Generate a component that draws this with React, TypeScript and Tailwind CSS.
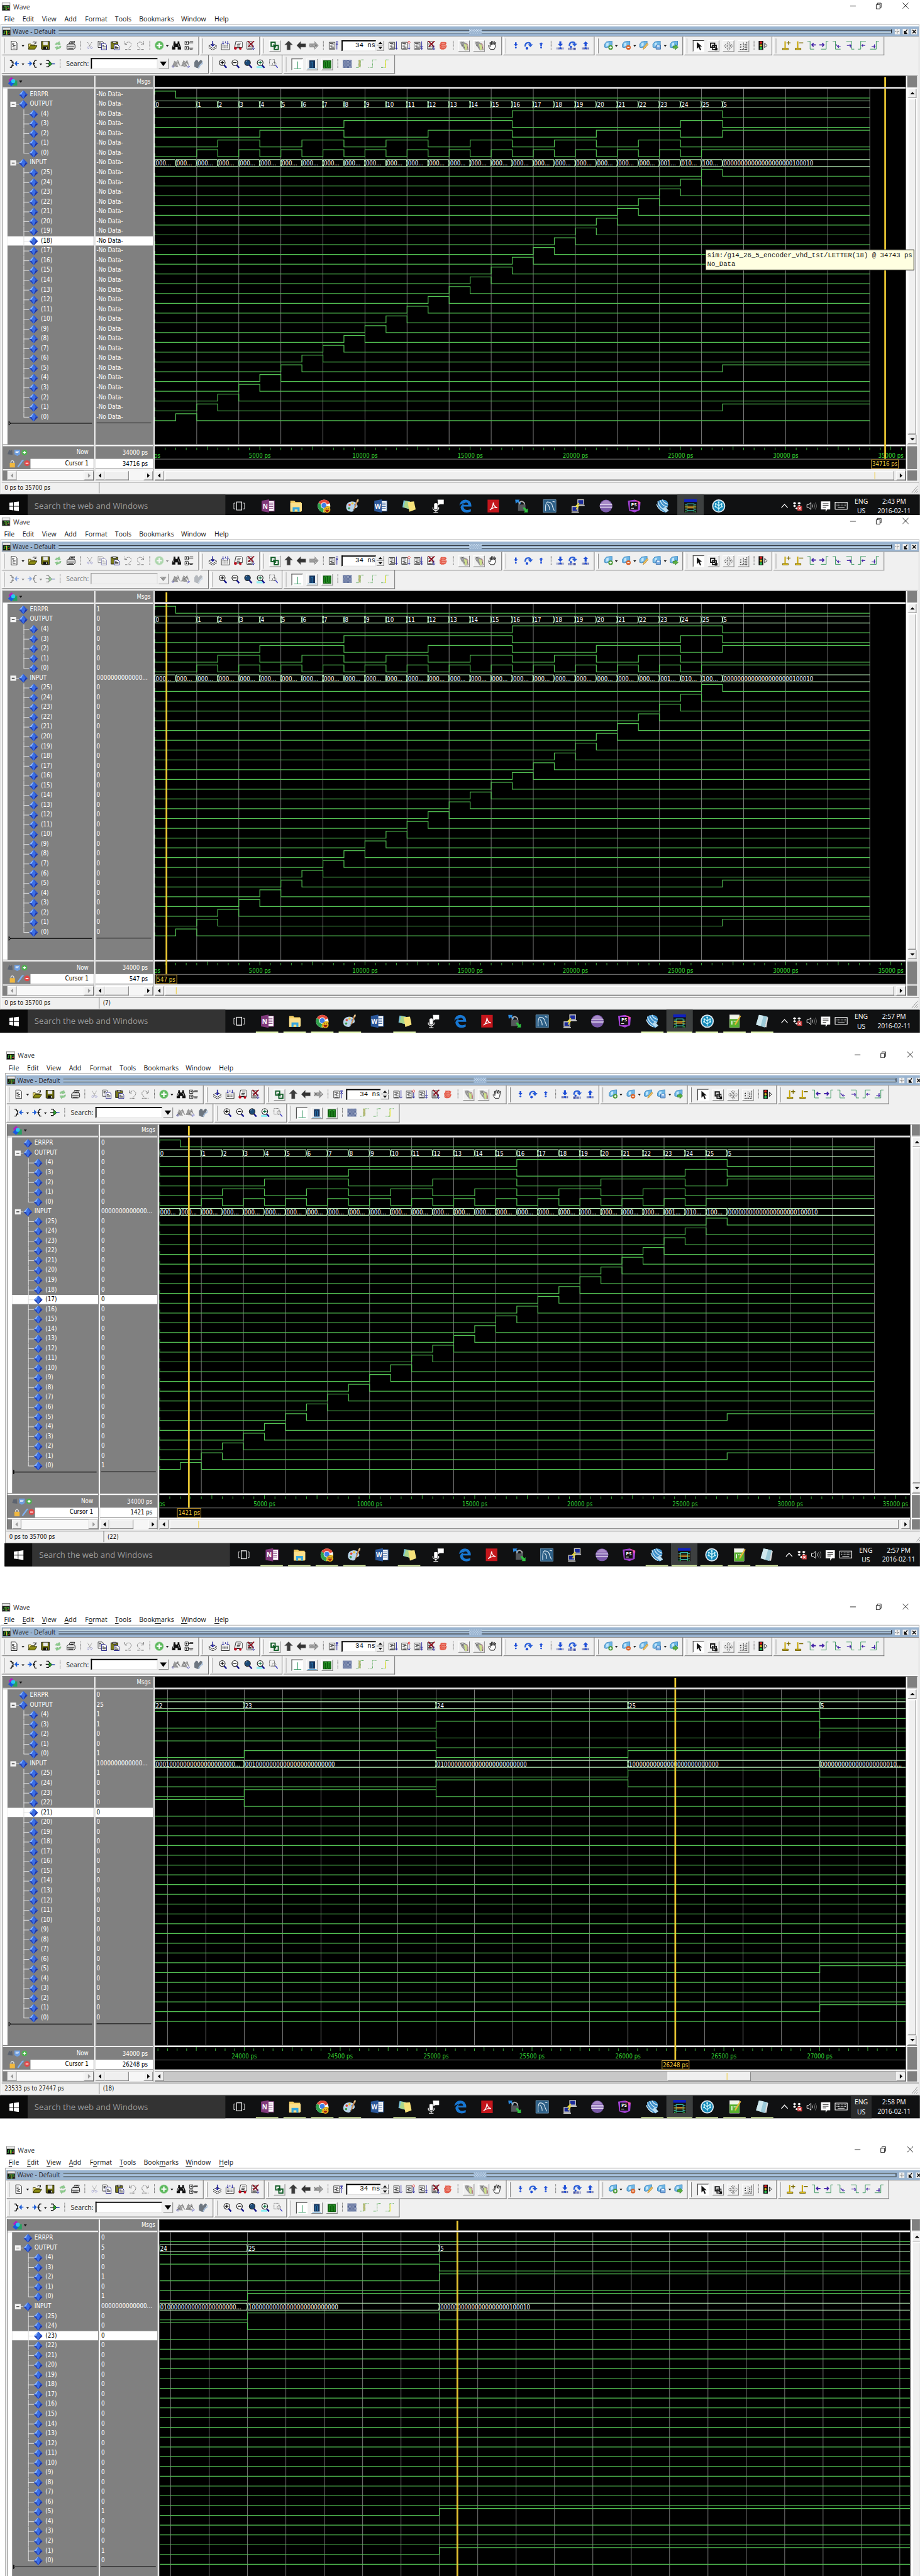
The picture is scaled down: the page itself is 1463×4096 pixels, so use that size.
import React from "react";

type Node = React.ReactNode;
type Slot = [number, number, Node];

/* ---------- signal model ---------- */

const OUTPUT: [number, number][] = [[0, 0]];
for (let n = 1; n <= 25; n++) OUTPUT.push([(n + 1) * 1000, n]);
OUTPUT.push([27000, 5]);

const INPUT: [number, number[]][] = [[0, []]];
for (let n = 0; n <= 25; n++) INPUT.push([(n + 1) * 1000, [n]]);
INPUT.push([27000, [1, 5]]);

const bitsToString = (bits: number[]) => {
  let s = "";
  for (let b = 25; b >= 0; b--) s += bits.includes(b) ? "1" : "0";
  return s;
};

const NAMES: string[] = ["ERRPR", "OUTPUT"];
for (let b = 4; b >= 0; b--) NAMES.push(`(${b})`);
NAMES.push("INPUT");
for (let b = 25; b >= 0; b--) NAMES.push(`(${b})`);

const UI_FONT = "'DejaVu Sans Condensed', 'Noto Sans', sans-serif";

type Cfg = {
  noData?: boolean;
  disabled?: boolean;
  mnemonics?: boolean;
  start: number;
  end: number;
  grid: number;
  minor: number;
  cursor: number;
  selected?: number;
  status: string;
  status2?: string;
  thumb: [number, number];
  mark: number;
  pitch: number;
  first: number;
  many: boolean;
  time: string;
  langLit?: boolean;
};

const valuesAt = (c: Cfg): string[] => {
  if (c.noData) return NAMES.map(() => "-No Data-");
  let out = 0;
  let inp: number[] = [];
  OUTPUT.forEach(([t, v]) => { if (t <= c.cursor) out = v; });
  INPUT.forEach(([t, v]) => { if (t <= c.cursor) inp = v; });
  const r = [c.cursor < 1000 ? "1" : "0", String(out)];
  for (let b = 4; b >= 0; b--) r.push(String((out >> b) & 1));
  r.push(bitsToString(inp).slice(0, 13) + "...");
  for (let b = 25; b >= 0; b--) r.push(inp.includes(b) ? "1" : "0");
  return r;
};

const W = 1306;

function Waves({ c }: { c: Cfg }) {
  const X = (t: number) => ((t - c.start) / (c.end - c.start)) * W;
  const stop = Math.min(c.end, 34000);
  const grid: number[] = [];
  for (let t = Math.ceil((c.start + 1) / c.grid) * c.grid; t <= stop; t += c.grid) grid.push(t);

  const digital = (levels: [number, number][], row: number) => {
    const hi = 4.5 + row * 17;
    const lo = 16.5 + row * 17;
    let d = "";
    levels.forEach(([t, v], i) => {
      const e = Math.min(i + 1 < levels.length ? levels[i + 1][0] : stop, stop);
      const s = Math.max(t, c.start);
      if (e <= s) return;
      const y = v ? hi : lo;
      if (!d) d = c.start === 0 ? `M0.5 ${v ? hi + 6 : lo - 6}V${y}` : `M1 ${y}`;
      else d += `V${y}`;
      d += `H${X(e).toFixed(1)}`;
    });
    return <path key={row} d={d} />;
  };

  const bus = (segs: [number, string][], row: number) =>
    segs.map(([t, label], i) => {
      const e = Math.min(i + 1 < segs.length ? segs[i + 1][0] : stop, stop);
      const s = Math.max(t, c.start);
      if (e <= s) return null;
      const a = X(s);
      const b = X(e);
      const w = b - a;
      const top = 4.5 + row * 17;
      const mid = top + 6;
      const bot = top + 12;
      const n = Math.floor((w - 15.6) / 6);
      const text = label.length * 6 + 4 <= w ? label : label.slice(0, n) + "...";
      const openEnd = e === stop;
      return (
        <g key={t}>
          <path
            d={openEnd
              ? `M${b} ${top}H${a + 1.2}L${a + 0.3} ${mid}L${a + 1.2} ${bot}H${b}`
              : `M${a + 0.3} ${mid}L${a + 1.2} ${top}H${b - 1.2}L${b - 0.3} ${mid}L${b - 1.2} ${bot}H${a + 1.2}Z`}
            fill="none"
            stroke="#bcf4bc"
            strokeWidth="1.15"
          />
          <text x={a + 1.6} y={top + 10.6} fontSize="10.5" fill="#fff">{text}</text>
        </g>
      );
    });

  const rows: Node[] = [digital([[0, 1], [1000, 0]], 0)];
  for (let b = 4; b >= 0; b--) rows.push(digital(OUTPUT.map(([t, v]) => [t, (v >> b) & 1]), 6 - b));
  for (let b = 25; b >= 0; b--) rows.push(digital(INPUT.map(([t, v]) => [t, v.includes(b) ? 1 : 0]), 33 - b));

  return (
    <svg className="block" width={W} height={619} fontFamily={UI_FONT}>
      {grid.map((t) => <path key={t} d={`M${X(t)} 0V619`} stroke="#858585" />)}
      <g fill="none" stroke="#52c052" strokeWidth="1.3">{rows}</g>
      {bus(OUTPUT.map(([t, v]) => [t, String(v)]), 1)}
      {bus(INPUT.map(([t, v]) => [t, bitsToString(v)]), 7)}
    </svg>
  );
}

function Ruler({ c }: { c: Cfg }) {
  const X = (t: number) => ((t - c.start) / (c.end - c.start)) * W;
  const ticks: number[] = [];
  for (let t = Math.ceil(c.start / c.minor) * c.minor; t <= c.end; t += c.minor) ticks.push(t);
  return (
    <svg className="block" width={W} height={22} fontFamily={UI_FONT} fontSize="10.5">
      <path d={ticks.filter((t) => t).map((t) => `M${X(t).toFixed(1)} ${t % (c.minor * 5) ? 2.5 : 0}V6.7`).join("")} stroke="#3fc03f" />
      {ticks.filter((t) => t % (c.minor * 10) === 0).map((t) => (
        <text key={t} x={X(t)} y={19.8} textAnchor="middle" fill="#34d034">{t} ps</text>
      ))}
    </svg>
  );
}

/* ---------- small icons ---------- */

function I({ children, w = 16, h = 16 }: { children?: Node; w?: number; h?: number }) {
  return <svg width={w} height={h} viewBox="0 0 16 16" className="block shrink-0" fill="none">{children}</svg>;
}

const page = (x = 0) => (
  <>
    <path d={`M${x + 2.5} .5h7l3 3v12h-10z`} fill="#fff" stroke="#111" />
    <path d={`M${x + 4} 4.5h4M${x + 4} 6.5h3M${x + 6} 8.5h4M${x + 4} 10.5h4M${x + 5} 12.5h5`} stroke="#111" />
  </>
);
const halfPage = (
  <>
    <path d="M.5 2.5h10v12h-10z" fill="#fff" stroke="#333" />
    <path d="M2 5h6M4 7h5M2 9h4M4 11h5M2 13h7" stroke="#111" />
  </>
);
const badge = (fill: string, kind: "plus" | "minus" | "save" | "edit" | "go") => (
  <>
    <path d="M1 6l3-4 4-1 6-1v8l-4 2-6 2-3-1z" fill="#6fb7e6" stroke="#3f86bd" />
    <path d="M4 4l4-1v5l-4 2z" fill="#c5e8fb" />
    {(kind === "plus" || kind === "minus") && <><circle cx="11.5" cy="11.5" r="4" fill={fill} /><path d={kind === "plus" ? "M9.5 11.5h4M11.5 9.5v4" : "M9.5 11.5h4"} stroke="#fff" strokeWidth="1.4" /></>}
    {kind === "save" && <><path d="M6.5 7.5h8v7h-8z" fill={fill} stroke="#3a6ca8" /><path d="M8.5 8h4v2h-4z" fill="#fff" /></>}
    {kind === "edit" && <path d="M7 15l1-4 6-7 2 2-6 7z" fill={fill} stroke="#b8862b" strokeWidth=".8" />}
    {kind === "go" && <path d="M6 9h4V6.5l5 4.500-5 4.500V13H6z" fill={fill} stroke="#2f7d2f" strokeWidth=".8" />}
  </>
);
const lens = (fill: string, inner?: Node) => (
  <>
    <path d="M9.5 10l4.500 5" stroke="#10108c" strokeWidth="2.6" />
    <circle cx="6.5" cy="6" r="5" fill={fill} stroke="#222" strokeWidth="1.3" />
    {inner}
  </>
);
const blueDown = <path d="M3 0h4v5h3L5 10.500 0 5h3z" fill="#1f4fd8" />;
const bars = "M1 12v4M3 12v4M5 12v4M7 12v4M9 12v4M11 12v4M13 12v4";

const ic: Record<string, Node> = {
  doc: <I>{page()}</I>,
  open: <I><path d="M.5 14.500v-9h4l1 1.500h6v2" fill="#f3e27a" stroke="#3a3a00" /><path d="M.5 14.500l3-6h12l-4 6z" fill="#8b8b12" stroke="#2b2b00" /><path d="M8 3q3-3 5 1M13.500 1v3.500h-3" stroke="#111" /></I>,
  save: <I><path d="M1 1h14v14H2l-1-1z" fill="#6f6f0c" stroke="#111" /><path d="M4 1.500h8v6H4z" fill="#e8e8e8" /><path d="M4 10h8v5H4z" fill="#111" /><path d="M9.500 11h1.500v3H9.500z" fill="#fff" /></I>,
  refresh: <I><path d="M3 6q2-4 6-3l1-2 2 5-5 1 1-2q-2 0-3 2zM13 9q0 5-6 5l-1 2-3-5 5-1-1 2q2 0 3-2z" fill="#8fcf8f" stroke="#6aa86a" strokeDasharray="1 1" /></I>,
  print: <I w={18}><path d="M5 6l2-5h8l-2 5" fill="#fff" stroke="#111" /><path d="M1.500 7.500l2-2h11l1 2v5l-2 2h-12z" fill="#ddd" stroke="#111" /><path d="M2 10.500h12M4 13h8M8 2.500h5M7 4.500h5" stroke="#111" /></I>,
  cut: <I w={13}><path d="M3 1l6 10M12 1L6 11" stroke="#555" strokeDasharray="1.500 1" /><circle cx="4" cy="13" r="2" stroke="#3a3aae" strokeDasharray="1 1" /><circle cx="11" cy="13" r="2" stroke="#3a3aae" strokeDasharray="1 1" /></I>,
  copy: <I><path d="M.5.5h7l2 2v9h-9z" fill="#fff" stroke="#111" /><path d="M6.500 4.500h6l3 3v8h-9z" fill="#fff" stroke="#10107c" /><path d="M2 3.500h4M2 5.500h3M2 7.500h3M8 8.500h3M8 10.500h6M8 12.500h6" stroke="#222" /></I>,
  paste: <I><path d="M1 2h12v12H1z" fill="#7d7d1c" stroke="#111" /><path d="M4 1h6v3H4z" fill="#ddd" stroke="#111" /><path d="M6.500 6.500h6l3 3v6h-9z" fill="#fff" stroke="#10107c" /><path d="M8 9.500h3M8 11.500h6M8 13.500h6" stroke="#222" /></I>,
  undo: <I><path d="M2 1v5h5M2.500 5.500Q9-1 13 5q1 5-5 8M3 15h10" stroke="#333" strokeDasharray="1 1" /></I>,
  redo: <I><path d="M14 1v5H9M13.500 5.500Q7-1 3 5q-1 5 5 8M3 15h11" stroke="#333" strokeDasharray="1 1" /></I>,
  plus: <I><circle cx="8" cy="8" r="7.500" fill="#5cb85c" stroke="#9bd39b" /><path d="M8 3.500v9M3.500 8h9" stroke="#fff" strokeWidth="2.400" /></I>,
  binoc: <I><path d="M3 1h3v3l1 1h2l1-1V1h3v3l3 8v3h-6v-4H6v4H0v-3l3-8z" fill="#111" /><path d="M3.500 6L2 11M11 6l2 5" stroke="#fff" strokeWidth=".9" /></I>,
  tree: <I><path d="M.5.5h6v6h-6zM.5 9.500h6v6h-6z" fill="#fff" stroke="#111" /><path d="M2 3.500h3M3.500 2v3M2 12.500h3M3.500 11v3M7 3.500h8M9 1.500h6M7 12.500h8M9 14.500h5" stroke="#111" /></I>,
  compile: <I><path d="M1 9l7-4 7 4-7 4zM1 12l7 4 7-4" fill="#fff" stroke="#222" /><path d="M8 0v9M5 6l3 3 3-3" stroke="#1a1a9a" strokeWidth="1.600" /></I>,
  compileAll: <I><path d="M1 5v10.500h14V5" stroke="#222" /><path d="M3 8h10M3 10h10M3 12h10" stroke="#222" strokeDasharray="1 1" /><path d="M4 0v6M2 4l2 2 2-2M12 0v6M10 4l2 2 2-2M8 1v3" stroke="#1a1a9a" /></I>,
  sim: <I><path d="M4.500.500h9l2 2v9h-6M4.500.500l-3 13" fill="#fff" stroke="#222" /><path d="M7 4h6M6 6.500h6M6 9h5" stroke="#222" /><path d="M3 12h9" stroke="#111" strokeWidth="1.500" /><circle cx="3.500" cy="13" r="2.500" fill="#c01020" /><circle cx="12" cy="13.500" r="2.200" fill="#c01020" /></I>,
  brk: <I><path d="M1.500 1.500h9v13h-9z" fill="#fff" stroke="#333" /><path d="M3 4h6M3 7h6M3 10h6M3 12.500h6" stroke="#111" /><path d="M3 0l10 11M14 0L4 10" stroke="#8e1220" strokeWidth="2" /><path d="M12.500 8v7M10 13l2.500 2.500L15 13" stroke="#1a1a9a" /></I>,
  link: <I><path d="M1.500 1.500h7v7h-7zM7 7h7v7H7z" stroke="#0c5a22" strokeWidth="2" /><path d="M5 5.500l5 5" stroke="#0c5a22" strokeWidth="2" /></I>,
  up: <I><path d="M8 0l7 7h-4v9H5V7H1z" fill="#3c3c3c" stroke="#888" strokeWidth=".6" /></I>,
  left: <I><path d="M0 8l7-7v4h9v6H7v4z" fill="#333" stroke="#888" strokeWidth=".6" /></I>,
  right: <I><path d="M16 8L9 1v4H0v6h9v4z" fill="url(#dk)" stroke="#999" strokeWidth=".6" /></I>,
  restart: <I w={18}>{halfPage}<path d="M12 1.500h4M12 3.500h4M14 4v11M12 7l2-2 2 2" stroke="#1a1a9a" /></I>,
  run: <I>{halfPage}<path d="M13.500 1v14M11 12l2.500 2.500L16 12" stroke="#1a1a9a" /></I>,
  cont: <I>{halfPage}<path d="M13.500 5v10M11.500 12l2 2.500 2-2.500" stroke="#1a1a9a" /><path d="M13.500 0l2 2.500-2 2.500-2-2.500z" fill="#fff" stroke="#e02020" /></I>,
  runAll: <I>{halfPage}<path d="M13.500 1v14M11 9l2.500 2.500L16 9M11 12.500l2.500 2.500 2.500-2.500" stroke="#1a1a9a" /></I>,
  stop: <I w={14}><path d="M3 1h9l3 2-2 3 2 3-2 5-4 2H4l-3-2V9l-1-2 2-2z" fill="url(#rd)" /><path d="M5 4.500h6M5 8h8M5 11.500h7" stroke="#f5b5a8" /></I>,
  dither: <I><path d="M1 1l5-1 8 4 2 11-6 1-7-9z" fill="url(#dk)" /><path d="M8 4l5 2v9h-3z" fill="#cfe08a" /><path d="M12 4l3 2v9" stroke="#d66" strokeDasharray="1 1" /></I>,
  hand: <I><path d="M4 15l-4-6 1-1 3 2-1-7h1.500l1 4L6 .5h1.500l.7 6L10 1h1l-.5 6 2-4h1l-1.500 9-1.500 3z" fill="#fff" stroke="#111" /></I>,
  bDown: <I w={11}><g transform="translate(2.500)">{blueDown}</g><circle cx="7.500" cy="13.500" r="2.300" fill="#1f4fd8" /></I>,
  bOver: <I><path d="M1 10Q1 2 8 2q5 0 5 4h3l-4.500 5L7 6h3q-1-2-3-1.500Q4 5 3.500 10z" fill="#2b5fd8" /><circle cx="5.500" cy="13" r="2.300" fill="#1f4fd8" /></I>,
  bUp: <I w={11}><path d="M5.500 10V5H2.500L7.500 0l5 5h-3v5z" fill="#1f4fd8" /><circle cx="7.500" cy="13.500" r="2.300" fill="#1f4fd8" /></I>,
  cDown: <I w={14}><g transform="translate(2.500)">{blueDown}</g><path d={bars} stroke="#1a2a8c" /><circle cx="7.500" cy="13.500" r="2" fill="#1f4fd8" /></I>,
  cOver: <I><path d="M1 9Q1 1 8 1q5 0 5 4h3l-4.500 5L7 5h3q-1-2-3-1.500Q4 4 3.500 9z" fill="#2b5fd8" /><circle cx="5" cy="10.500" r="1.800" fill="#1f4fd8" /><path d={bars} stroke="#1a2a8c" /></I>,
  cUp: <I w={14}><path d="M5.500 10V5H2.500L7.500 0l5 5h-3v5z" fill="#1f4fd8" /><path d={bars} stroke="#1a2a8c" /><circle cx="7.500" cy="13.500" r="2" fill="#1f4fd8" /></I>,
  bkAdd: <I w={17}>{badge("#4f9a3c", "plus")}</I>,
  bkDel: <I w={17}>{badge("#d9632a", "minus")}</I>,
  bkEdit: <I w={17}>{badge("#f0c060", "edit")}</I>,
  bkSave: <I w={17}>{badge("#7fb0e4", "save")}</I>,
  bkGo: <I w={17}>{badge("#5cb040", "go")}</I>,
  arrow: <I><path d="M5 1v12l3-3 2.500 5.500 2-1L10 9h4z" fill="#111" /></I>,
  zoomBox: <I><path d="M3 3h7v7H3z" stroke="#111" strokeWidth="2" /><path d="M6 7h7v7H6zM9 9l5 6M14 11v4h-4" stroke="#111" strokeWidth="1.600" /></I>,
  move: <I><path d="M8 0l3 3H9v4h4V5l3 3-3 3V9H9v4h2l-3 3-3-3h2V9H3v2L0 8l3-3v2h4V3H5z" stroke="#222" strokeDasharray="1 1" /></I>,
  measure: <I><path d="M2 6h3M3.500 4.500v3M2 10h3M3.500 8.500v3M2 14h12M8 2v12M14 1v14M10 5h3M10 8h3M10 11h3" stroke="#111" strokeDasharray="2 1" /></I>,
  traffic: <I w={17}><path d="M0 0h8v16H0z" fill="#111" /><circle cx="4" cy="3" r="2.200" fill="#e02020" /><circle cx="4" cy="8" r="2" fill="#d8b820" /><circle cx="4" cy="13" r="2.200" fill="#28c050" /><path d="M10.500 4v8l4-4z" fill="#fff" stroke="#111" /></I>,
  curAdd: <I><path d="M1 13h10v2.500H1z" fill="#e8c820" stroke="#6a5a00" /><path d="M5.500 1v12" stroke="#c8a400" strokeWidth="2.200" /><path d="M8 3.500h7M11.500 0v7" stroke="#7a6a00" strokeWidth="1.500" /></I>,
  curDel: <I><path d="M1 13h10v2.500H1z" fill="#e8c820" stroke="#6a5a00" /><path d="M5.500 1v12" stroke="#c8a400" strokeWidth="2.200" /><path d="M8 3.500h7" stroke="#7a6a00" strokeWidth="1.500" /></I>,
  e1: <I><path d="M0 .5h5v14h7" stroke="#2f8f55" /><path d="M15 7H8M11 4L8 7l3 3" stroke="#4424a8" strokeWidth="2" /></I>,
  e2: <I><path d="M16 .5h-4v14H3" stroke="#2f8f55" /><path d="M0 7h8M5 4l3 3-3 3" stroke="#4424a8" strokeWidth="2" /></I>,
  e3: <I><path d="M0 .5h5v14h9" stroke="#2f8f55" /><path d="M6 6l3 4M14 10H9M11 8l-2 2 2 2" stroke="#4424a8" strokeWidth="1.200" /></I>,
  e4: <I><path d="M2 .5h9v14h5" stroke="#2f8f55" /><path d="M3 8h7M8 6l2 2-2 3M9 11h2" stroke="#4424a8" strokeWidth="1.300" /></I>,
  e5: <I><path d="M0 14.500h5V.5h9" stroke="#2f8f55" /><path d="M13 8H7M9 6L7 8l2 2" stroke="#4424a8" strokeWidth="1.300" /></I>,
  e6: <I><path d="M0 14.500h11V.5h5" stroke="#2f8f55" /><path d="M3 10h6M8 6v7M7 8l2 2-2 2" stroke="#4424a8" strokeWidth="1.300" /></I>,
  inL: <I><path d="M0 2h3l3 5.500L3 14H0M3 5h4M3 10.500h4" stroke="#111" strokeWidth="1.500" /><path d="M16 7.500h-6M12 4.500L9 7.500l3 3z" stroke="#1f5fd8" fill="#1f5fd8" strokeWidth="1.500" /></I>,
  inR: <I><path d="M16 2h-3l-3 5.500 3 6.500h3M13 7.500H9" stroke="#111" strokeWidth="1.500" /><path d="M0 7.500h6M4 4.500l3 3-3 3z" stroke="#1f5fd8" fill="#1f5fd8" strokeWidth="1.500" /></I>,
  net: <I w={17}><path d="M1 2h4l3 5.500L5 13H1M0 7.500h7" stroke="#111" strokeWidth="1.400" /><path d="M7 4l4 4-4 4-2-4z" fill="#2c9a2c" stroke="#0a4a0a" /><path d="M10 8h6" stroke="#1f3fa8" strokeWidth="1.500" /></I>,
  findA: <I w={17}><path d="M1 13L5 3l3 2 3 8M8 5l3-3 4 10" fill="url(#dk)" stroke="#777" strokeDasharray="1 1" /><path d="M0 12l3 3M2 11l2 2" stroke="#4a4ac0" /></I>,
  findB: <I w={17}><path d="M1 12L5 2l3 3 3 8M8 5l3-3 3 9" fill="url(#dk)" stroke="#777" strokeDasharray="1 1" /><path d="M16 12l-4 3M14 11l-3 3" stroke="#4a4ac0" /></I>,
  findC: <I><path d="M1 5l3-4 3 1 1 3 4-4 3 2-2 5-4 8-4-1-4-2z" fill="#6d7680" /><path d="M15 4q2 4-3 5l-4 6" stroke="#a9c0dc" strokeWidth="2" /></I>,
  zIn: <I>{lens("#fff", <path d="M6.500 3v6M3.500 6h6" stroke="#111" strokeWidth="1.500" />)}</I>,
  zOut: <I>{lens("#fff", <path d="M3.500 6h6" stroke="#111" strokeWidth="1.500" />)}</I>,
  zFull: <I>{lens("#1c4a78", <path d="M4 4l2-1.500" stroke="#cde" />)}</I>,
  zCur: <I><path d="M0 12h11v3.500H0z" fill="#8ff0f4" />{lens("#fff", <path d="M6.500 3v6M3.500 6h6" stroke="#0a6a3a" strokeWidth="1.500" />)}</I>,
  zSel: <I><path d="M.5.500h9v10h-9z" stroke="#333" strokeDasharray="1 1" /><circle cx="9" cy="8" r="3" stroke="#333" strokeDasharray="1 1" /><path d="M11 10l4 5" stroke="#3a3ac0" strokeWidth="1.500" /></I>,
  w1: <I><path d="M2 15.500h13M8.500 3v12" stroke="#1c8a50" strokeWidth="1.100" /></I>,
  w2: <I><path d="M3 1h10v13H3z" fill="#16345c" /><path d="M6 14V4h3v10M0 15.500h16" stroke="#2f8fd0" /></I>,
  w3: <I><path d="M1 1h14v14H1z" fill="#0b5a0b" /><path d="M2 13.500h2V3h3v10h3V3h3v11" stroke="#35b035" /></I>,
  w4: <I><path d="M0 1h16v14H0z" fill="url(#bd)" /></I>,
  w5: <I><path d="M1 14.500h5V1M9 14V1h6" stroke="#3a9a3a" strokeDasharray="1 1" /><path d="M6 1h3v13H6z" fill="#b8b870" /></I>,
  w6: <I><path d="M1 14.500h7V1h7" stroke="#3a9a3a" strokeDasharray="1 1" /></I>,
  w7: <I><path d="M1 14.500h7V1h7" stroke="#3a9a3a" strokeDasharray="1 1" /><path d="M8.500 2v13" stroke="#e8e840" strokeWidth="1.500" /></I>,
};

const caret = <svg width="6" height="4" className="mt-[7px] block"><path d="M.5.5h5L3 3.500z" fill="#111" /></svg>;
const sep = <div className="h-[15px] w-px border-l border-dotted border-[#333]" />;

function Raised({ children, on }: { children: Node; on?: boolean }) {
  return (
    <div className={on
      ? "-mt-px flex h-[20px] w-[20px] items-center justify-center border border-b-white border-l-[#222] border-r-white border-t-[#222] bg-white"
      : "-mt-px flex h-[20px] w-[20px] items-center justify-center border border-b-[#777] border-l-white border-r-[#777] border-t-white bg-[#efefef]"}>
      {children}
    </div>
  );
}

/* A toolbar group: each slot holds its left edge, its width and its content. */
function Group({ x, end, slots }: { x: number; end: number; slots: Slot[] }) {
  let at = x + 6;
  return (
    <div className="mr-[2px] flex h-[32px] shrink-0 border-b border-r border-[#6c6c6c] border-l border-l-white" style={{ width: end - x }}>
      <div className="ml-[2px] mt-[3px] h-[26px] w-[2px] border-l border-r border-l-white border-r-[#777]" />
      <div className="ml-px flex pt-[7px]">
        {slots.map(([sx, w, node], i) => {
          const gap = sx - at;
          at = sx + w;
          return <div key={i} className="shrink-0" style={{ marginLeft: gap, width: w }}>{node}</div>;
        })}
      </div>
    </div>
  );
}

const R = (n: Node, on = false) => <Raised on={on}>{n}</Raised>;
const dim = (n: Node, off?: boolean) => <div className={off ? "opacity-45" : ""}>{n}</div>;

function Toolbars({ off }: { off?: boolean }) {
  return (
    <div className="h-[67px] border-b border-white bg-[#f0f0f0]">
      <div className="flex">
        <Group x={3} end={346} slots={[
          [17, 16, ic.doc], [37, 6, caret], [49, 16, ic.open], [71, 16, ic.save], [93, 16, ic.refresh], [114, 18, ic.print], [139, 1, sep],
          [150, 13, ic.cut], [170, 16, dim(ic.copy, off)], [192, 16, ic.paste], [215, 16, ic.undo], [236, 16, ic.redo], [260, 1, sep],
          [269, 16, dim(ic.plus, off)], [288, 6, dim(caret, off)], [299, 16, ic.binoc], [321, 16, ic.tree],
        ]} />
        <Group x={348} end={452} slots={[[362, 16, ic.compile], [384, 16, ic.compileAll], [406, 16, ic.sim], [428, 16, ic.brk]]} />
        <Group x={454} end={873} slots={[
          [468, 20, R(ic.link)], [494, 16, ic.up], [516, 16, ic.left], [538, 16, ic.right], [562, 1, sep], [571, 18, ic.restart],
          [594, 60, <div className="-mt-px flex h-[19px] items-center justify-end border-l-2 border-t-2 border-b border-r border-b-[#ddd] border-r-[#ddd] border-l-black border-t-black bg-white font-['Liberation_Mono',monospace] text-[11.7px] leading-none">34 ns</div>],
          [655, 13, <div className="flex h-[17px] flex-col gap-px">
            <div className="flex flex-1 items-center justify-center border-b border-r border-[#666] bg-[#f0f0f0]"><svg width="7" height="5"><path d="M0 4.500L3.500.500 7 4.500z" fill="#111" /></svg></div>
            <div className="flex flex-1 items-center justify-center border-b border-r border-[#666] bg-[#f0f0f0]"><svg width="7" height="5"><path d="M0 .5L3.500 4.500 7 .5z" fill="#111" /></svg></div>
          </div>],
          [676, 16, ic.run], [698, 16, ic.cont], [720, 16, ic.runAll], [742, 16, ic.brk], [764, 14, ic.stop], [788, 1, sep],
          [797, 20, R(ic.dither)], [823, 20, R(ic.dither)], [849, 16, ic.hand],
        ]} />
        <Group x={875} end={1034} slots={[[892, 11, ic.bDown], [911, 16, ic.bOver], [936, 11, ic.bUp], [958, 1, sep], [968, 14, ic.cDown], [988, 16, ic.cOver], [1012, 14, ic.cUp]]} />
        <Group x={1036} end={1188} slots={[[1050, 17, ic.bkAdd], [1069, 6, caret], [1081, 17, ic.bkDel], [1101, 6, caret], [1111, 17, ic.bkEdit], [1134, 17, ic.bkSave], [1154, 6, caret], [1164, 17, ic.bkGo]]} />
        <Group x={1190} end={1343} slots={[[1205, 20, R(ic.arrow, true)], [1231, 20, R(ic.zoomBox)], [1257, 20, R(ic.move)], [1283, 20, R(ic.measure)], [1311, 1, sep], [1319, 17, ic.traffic]]} />
        <Group x={1345} end={1538} slots={[[1360, 16, ic.curAdd], [1382, 16, ic.curDel], [1404, 16, ic.e1], [1425, 16, ic.e2], [1448, 16, ic.e3], [1470, 16, ic.e4], [1492, 16, ic.e5], [1513, 16, ic.e6]]} />
      </div>
      <div className="flex">
        <Group x={3} end={363} slots={[
          [17, 16, dim(ic.inL, off)], [37, 6, dim(caret, off)], [48, 16, dim(ic.inR, off)], [68, 6, dim(caret, off)], [79, 17, dim(ic.net, off)], [104, 1, sep],
          [115, 40, <div className={`pt-px font-['Open_Sans',sans-serif] text-[11.5px] leading-[13px] ${off ? "text-[#777]" : "text-[#222]"}`}>Search:</div>],
          [158, 116, <div className={`-mt-[2px] h-[19px] border-b border-r border-b-[#ddd] border-r-[#ddd] ${off ? "border-l border-t border-l-[#777] border-t-[#777] bg-[#f0f0f0]" : "border-l-2 border-t-2 border-l-black border-t-black bg-white"}`} />],
          [276, 17, <div className="-mt-px flex h-[18px] items-center justify-center border-b border-r border-[#777] bg-[#f0f0f0]"><svg width="12" height="8"><path d="M0 0h12L6 8z" fill={off ? "url(#dk)" : "#000"} /></svg></div>],
          [298, 17, ic.findA], [314, 17, ic.findB], [337, 16, dim(ic.findC, off)],
        ]} />
        <Group x={365} end={491} slots={[[380, 16, ic.zIn], [402, 16, ic.zOut], [424, 16, ic.zFull], [446, 16, ic.zCur], [468, 16, ic.zSel]]} />
        <Group x={493} end={687} slots={[[507, 20, R(ic.w1, true)], [533, 20, R(ic.w2)], [559, 20, R(ic.w3)], [587, 1, sep], [596, 16, ic.w4], [618, 16, ic.w5], [640, 16, ic.w6], [662, 16, ic.w7]]} />
      </div>
    </div>
  );
}

/* ---------- window chrome ---------- */

const AppIcon = () => (
  <svg width="15" height="15" className="block shrink-0">
    <path d="M.5.5h14v14H.5z" fill="#e8e8e8" stroke="#777" />
    <path d="M1 5h13v9H1z" fill="#111" />
    <path d="M2 11.500h2V7h3v6h2V7h3v4" fill="none" stroke="#3cc040" />
    <path d="M7.500 6v7" stroke="#e8d030" />
    <path d="M10 11h3" stroke="#e04040" />
  </svg>
);

const MENU: [string, number, number][] = [["File", 0, 32], ["Edit", 0, 34], ["View", 0, 39], ["Add", 0, 36], ["Format", 1, 52], ["Tools", 0, 42], ["Bookmarks", 4, 73], ["Window", 0, 58], ["Help", 0, 40]];

function TitleAndMenu({ mnemonics }: { mnemonics?: boolean }) {
  return (
    <div className="h-[42px] bg-white font-['Open_Sans',sans-serif] text-[11.5px] leading-none text-[#111]">
      <div className="flex h-[23px] items-center pl-[3px]">
        <AppIcon />
        <span className="ml-[5px] text-[#333]">Wave</span>
        <svg width="104" height="12" className="-mt-[4px] ml-auto mr-[18px]" fill="none" stroke="#111">
          <path d="M.5 6.500h10" /><path d="M46 4h6.500v7.500H46zM48 4V1.500h6.500V9H52.500" /><path d="M92 1l10 10M102 1L92 11" />
        </svg>
      </div>
      <div className="flex h-[20px] items-center pl-[7px]">
        {MENU.map(([m, k, w]) => (
          <div key={m} className="shrink-0" style={{ width: w }}>
            {mnemonics ? <>{m.slice(0, k)}<span className="underline underline-offset-2">{m[k]}</span>{m.slice(k + 1)}</> : m}
          </div>
        ))}
      </div>
    </div>
  );
}

function PaneTitle() {
  const rule = "h-[2px] border-b border-t border-b-black border-t-[#dff4ff]";
  return (
    <div className="flex h-[17px] items-center bg-[#9ab4d0] pl-px">
      <AppIcon />
      <span className="ml-[3px] w-[80px] font-['Open_Sans',sans-serif] text-[11px] leading-none text-[#1c1c2c]">Wave - Default</span>
      <div className="flex w-[714px] flex-col gap-[3px]"><div className={rule} /><div className={rule} /></div>
      <svg width="22" height="9" className="mx-0 block">
        {[0, 1, 2, 3].map((r) => <path key={r} d={`M${r % 2 ? 2 : 0} ${r * 2.300 + 0.800}H22`} stroke="#e8f4ff" strokeDasharray="1.500 2.500" />)}
      </svg>
      <div className="flex w-[713px] flex-col gap-[3px] border-r border-black"><div className={rule} /><div className={rule} /></div>
      <svg width="40" height="10" className="ml-[5px] block">
        <path d="M0 0h9v10H0zM14 0h10v10H14zM29 0h10v10H29z" fill="#efefef" />
        <path d="M4.500 1v8M1 5h7" stroke="#444" strokeDasharray="1.500 1" />
        <path d="M17 3.500v5h5M22 1l-4 6M18 4v3h3" stroke="#111" strokeWidth="1.500" fill="none" />
        <path d="M31 2l6 6M37 2l-6 6" stroke="#111" strokeWidth="1.700" />
      </svg>
    </div>
  );
}

function Diamond() {
  return (
    <svg width="15" height="15" className="relative block shrink-0">
      <path d="M7.500 0L15 7.500 7.500 15 0 7.500z" fill="#3b6fe6" />
      <path d="M7.500 0L0 7.500h4z" fill="#8db8ff" />
      <path d="M7.500 0L15 7.500h-4z" fill="#2c55c8" />
      <path d="M0 7.500h4L7.500 15z" fill="#2440b0" />
      <path d="M15 7.500h-4L7.500 15z" fill="#20309c" />
    </svg>
  );
}

function NameRow({ name, i, sel }: { name: string; i: number; sel: boolean }) {
  const top = i === 0 || i === 1 || i === 7;
  const last = i === 6 || i === 33;
  return (
    <div className={`flex h-[17px] items-center text-[10.8px] leading-none ${sel ? "text-black" : "text-white"}`}>
      <div className={`mt-px flex h-[16px] w-full items-center ${sel ? "bg-white" : ""}`}>
        {top ? (
          <>
            <svg width="20" height="16" className="block shrink-0">
              {i > 0 && <><path d="M14 8.500h6" stroke="#ddd" /><path d="M5 4h10v9H5z" fill="#f4f4f4" /><path d="M7.500 8.500h5" stroke="#222" strokeWidth="1.200" /></>}
            </svg>
            <Diamond />
            <span className="ml-[4px]">{name}</span>
          </>
        ) : (
          <>
            <svg width="38" height="17" className="block shrink-0"><path d={`M28.500 0V${last ? 8.500 : 17}M28 8.500h10`} stroke={sel ? "#ddd" : "#e8e8e8"} fill="none" /></svg>
            <Diamond />
            <span className="ml-[5px]">{name}</span>
          </>
        )}
      </div>
    </div>
  );
}

const Cut = () => <div className="h-[3px] border-t border-[#6b6b6b] bg-white" />;
const Divider = () => <div className="w-[3px] shrink-0 border-l border-[#5f5f5f] bg-white" />;

function ScrollBtn({ dir, faint, w = 16 }: { dir: "l" | "r" | "u" | "d"; faint?: boolean; w?: number }) {
  const d = { l: "M6 0v8L1.500 4z", r: "M2 0v8l4.500-4z", u: "M0 6h8L4 2z", d: "M0 2h8L4 6z" }[dir];
  return (
    <div className="flex h-[16px] shrink-0 items-center justify-center border border-b-[#777] border-l-white border-r-[#777] border-t-white bg-[#efefef]" style={{ width: w }}>
      <svg width="8" height="8"><path d={d} fill={faint ? "#9a9a9a" : "#000"} /></svg>
    </div>
  );
}

const thumbCls = "h-[16px] shrink-0 border border-b-[#777] border-l-white border-r-[#777] border-t-white bg-[#efefef]";

function Panel({ c }: { c: Cfg }) {
  const vals = valuesAt(c);
  const cx = ((c.cursor - c.start) / (c.end - c.start)) * W;
  const label = `${c.cursor} ps`;
  const labelW = label.length * 6 - 1 + (c.cursor < 1000 ? 2 : 1);
  return (
    <div className="ml-px flex h-[705px] w-[1592px] border-l border-t border-[#686868] bg-[#f0f0f0] font-['DejaVu_Sans_Condensed','Noto_Sans',sans-serif]">
      {/* signal names */}
      <div className="w-[158px] shrink-0 bg-[#808080]">
        <div className="flex h-[19px] items-center pl-[8px]">
          <svg width="18" height="16" className="block"><path d="M2 5l5-5 4 4v7H5z" fill="#b020c0" /><path d="M9 6h8v9H9z" fill="#28a060" /><path d="M6 6l6 4-5 6-6-5z" fill="#1858e0" /><circle cx="10" cy="7" r="3.500" fill="#28c8f0" /></svg>
          <svg width="6" height="4" className="ml-[2px]"><path d="M0 0h6L3 4z" fill="#111" /></svg>
        </div>
        <Cut />
        <div className="flex h-[619px] bg-white pl-[8px]">
          <div className="w-[150px] bg-[#808080] pt-px">
            {NAMES.map((n, i) => <NameRow key={i} name={n} i={i} sel={c.selected === i} />)}
            <svg width="150" height="8" className="-mt-px block"><path d="M2.500.5v7l3-3.500z" fill="none" stroke="#000" /><path d="M5 4h142" stroke="#000" strokeWidth="1.200" /></svg>
          </div>
        </div>
        <Cut />
        <div className="flex h-[22px] items-center pl-[8px] pr-[9px] text-[10.7px] leading-none text-white">
          <svg width="36" height="12"><path d="M0 9l3-8 2 2 3-2 1 9z" fill="#5d6470" /><path d="M12 1h10v8l-5 3-5-3z" fill="#6f9fe0" /><path d="M14 4h6M14 6h5" stroke="#fff" /><circle cx="29.500" cy="6" r="5" fill="#4fb050" /><path d="M27 6h5M29.500 3.500v5" stroke="#fff" strokeWidth="1.600" /></svg>
          <span className="ml-auto">Now</span>
        </div>
        <div className="flex h-[17px] text-[10.7px] leading-none text-black">
          <svg width="48" height="17"><path d="M12 7h9v8h-9z" fill="#f0b840" /><path d="M14 7V5q2.500-4 5 0v2" fill="none" stroke="#ddd" strokeWidth="1.500" /><path d="M26 14l6-8q2-4 4-3" stroke="#7fb0f0" strokeWidth="2.500" fill="none" /><circle cx="42" cy="7.500" r="5" fill="#e04848" /><path d="M39.500 7.500h5" stroke="#fff" strokeWidth="1.600" /></svg>
          <div className="flex flex-1 items-center justify-end bg-white pr-[9px]">Cursor 1</div>
        </div>
        <Cut />
        <div className="flex h-[18px] items-center pl-[8px]">
          <ScrollBtn dir="l" faint />
          <div className="h-[16px] flex-1 bg-[#f8f8f8]" />
          <ScrollBtn dir="r" faint w={17} />
        </div>
      </div>
      <Divider />
      {/* values */}
      <div className="w-[100px] shrink-0 bg-[#808080]">
        <div className="flex h-[19px] items-center justify-end pr-[4px] text-[10.5px] leading-none text-white">Msgs</div>
        <Cut />
        <div className="h-[619px] pt-px">
          {vals.map((v, i) => (
            <div key={i} className="h-[17px] pt-px">
              <div className={`flex h-[16px] items-center whitespace-nowrap pl-[2px] text-[10.7px] leading-none ${c.selected === i ? "bg-white text-black" : "text-white"}`}>{v}</div>
            </div>
          ))}
          <div className="mx-[2px] mt-[2px] h-px w-[95px] bg-black" />
        </div>
        <Cut />
        <div className="flex h-[22px] items-center justify-end pr-[9px] text-[10.5px] leading-none text-white">34000 ps</div>
        <div className="flex h-[17px] items-center justify-end bg-white pr-[9px] text-[10.5px] leading-none text-black">{label}</div>
        <Cut />
        <div className="flex h-[18px] items-center bg-[#f6f6f6]">
          <ScrollBtn dir="l" />
          <div className={`${thumbCls} w-[42px]`} />
          <div className="flex-1" />
          <ScrollBtn dir="r" />
        </div>
      </div>
      <Divider />
      {/* waveforms */}
      <div className="relative w-[1306px] shrink-0 overflow-hidden bg-black">
        <div className="h-[19px]" />
        <Cut />
        <Waves c={c} />
        <Cut />
        <Ruler c={c} />
        <div className="h-[17px] border-t border-[#8a8a8a]" />
        <Cut />
        <div className={`flex h-[18px] items-center ${c.thumb[0] > 18 ? "bg-[#c8c8c8]" : "bg-[#efefef]"}`}>
          <ScrollBtn dir="l" />
          <div className={`${thumbCls} relative`} style={{ marginLeft: c.thumb[0] - 16, width: c.thumb[1] - c.thumb[0] }}>
            <div className="absolute top-px h-[12px] w-px bg-[#f0c828]" style={{ left: c.mark - c.thumb[0] }} />
          </div>
          <div className="ml-auto"><ScrollBtn dir="r" /></div>
        </div>
        <div className="absolute top-[2px] h-[17px] w-[3px] bg-[#f0cc34]" style={{ left: cx - 1.5 }} />
        <div className="absolute top-[22px] h-[644px] w-[3px] bg-[#f0cc34] opacity-95" style={{ left: cx - 1.5 }} />
        <div
          className="absolute top-[667px] flex h-[16px] items-center justify-center whitespace-nowrap border border-[#d8a838] bg-black text-[10.5px] leading-none text-[#f0c838]"
          style={{ left: cx - labelW / 2, width: labelW }}
        >
          {label}
        </div>
      </div>
      <Divider />
      {/* vertical scroll bar */}
      <div className="w-[17px] shrink-0 bg-white">
        <div className="h-[19px] bg-[#808080]" />
        <Cut />
        <div className="flex h-[619px] flex-col pl-px">
          <ScrollBtn dir="u" w={15} />
          <div className="mt-[2px] h-[584px] w-[14px] border border-b-2 border-b-[#888] border-l-white border-r-[#888] border-t-white bg-[#f0f0f0]" />
          <ScrollBtn dir="d" w={15} />
        </div>
        <Cut />
        <div className="h-[39px] bg-[#808080]" />
        <Cut />
        <div className="h-[18px] bg-[#808080]" />
      </div>
    </div>
  );
}

/* ---------- taskbar ---------- */

function B({ children }: { children: Node }) {
  return <svg width="24" height="24" viewBox="0 0 24 24" className="block" fill="none">{children}</svg>;
}

const office = (fill: string, letter: string) => (
  <B>
    <path d="M12 3h11v18H12z" fill="#fff" stroke={fill} strokeWidth="1.200" />
    <path d="M14 7h7M14 10h7M14 13h7M14 16h7" stroke={fill} />
    <path d="M1 3l13-2.500v23L1 21z" fill={fill} />
    <text x="7.300" y="16.300" fontSize="11" fontWeight="700" textAnchor="middle" fill="#fff" fontFamily="'Open Sans', sans-serif">{letter}</text>
  </B>
);

const APPS: Node[] = [
  office("#80397b", "N"),
  <B><path d="M2 3h7l2 2h10v17H2z" fill="#f5cf63" /><path d="M2 7h20v14H2z" fill="#fbe08c" /><path d="M6 22v-8h12v8h-3.500v-4h-5v4z" fill="#35a8e0" /></B>,
  <B><circle cx="11.500" cy="12" r="11" fill="#fff" /><path d="M11.500 12L2 6.500Q6 1 11.500 1q7 0 10 6z" fill="#e04a3a" /><path d="M11.500 12L2 6.500Q-1.500 14 4 20q3 3 6.500 3z" fill="#2fa24c" /><path d="M11.500 12h11q0 7-6 10l-6 1z" fill="#f7cf3a" /><circle cx="11.500" cy="11" r="5.500" fill="#fff" /><circle cx="11.500" cy="11" r="4.300" fill="#3f7fe8" /><circle cx="17" cy="18.500" r="5.500" fill="#f0c020" stroke="#8a5a00" strokeWidth=".6" /><path d="M13.500 18.500h7q-1 4-3.500 4t-3.500-4z" fill="#a02010" /><path d="M14.500 16.500h1.500M18 16.500h1.500" stroke="#222" /></B>,
  <B><path d="M1 14Q1 5 11 4q9 0 10 8 0 4-5 4-3 1-2 4-1 2-4 2-9-1-9-8z" fill="#b9d4ea" /><circle cx="7" cy="10" r="2" fill="#e04a3a" /><circle cx="12" cy="7.500" r="2" fill="#f0c030" /><circle cx="6" cy="16" r="2" fill="#3a9a4a" /><circle cx="17" cy="10" r="1.800" fill="#3060c0" /><path d="M20 1l2 2-5 12-3 5 1-6z" fill="#c88a50" /><path d="M21 0l2 1-1 4-3-1z" fill="#e8c890" /></B>,
  office("#2a5699", "W"),
  <B><path d="M3 2l11 2-2 13L1 14z" fill="#79c3d8" /><path d="M6 3l9 2-3 12-9-3z" fill="#a9d68a" /><path d="M10 5l11-1 3 14-11 4z" fill="#f6e27a" /></B>,
  <B><path d="M13 1h11v8h-7l-3 2z" fill="#fff" /><path d="M7 8q3.500-2 6 0v9q-3 2.500-6 0z" fill="#fff" /><path d="M5 14v3q5 6 10 0v-3M10 20v3M6 23.200h8" stroke="#fff" strokeWidth="1.300" /></B>,
  <B><path d="M2 11Q4 1 13 1q10 1 10 12H9q1 6 7 6 3 0 6-1.500v4Q19 23.500 15 23.500 5 23 4 14 6 8 12 7q-6 0-10 4z" fill="#1877d2" /><path d="M9 10h8.500Q17 6 13.500 6 10 6.500 9 10z" fill="#10131a" /></B>,
  <B><path d="M2 1h20v22H2z" fill="#c4161c" /><path d="M6 19q5-3 6-13 1 8 7 9-8-1-13 4z" stroke="#fff" strokeWidth="1.500" /></B>,
  <B><path d="M1 1h8L7 3l4 4-2 2-4-4-3 3z" fill="#2a8ae0" /><path d="M8 10V7q4-6 9 0v3" stroke="#aaa" strokeWidth="2.200" /><path d="M6 9.500h13v11H6z" fill="#55585c" /><path d="M14 15l3-1 4 4 2-2v7h-7l2-2z" fill="#2fc040" /></B>,
  <B><path d="M1 1h22v22H1z" fill="#2d5f86" stroke="#6b94b2" /><path d="M5 21q-1-14 3-16 8 0 9 8l3 7M8 9q4 3 4 10M17 4l4 1" stroke="#d8e6f0" strokeWidth="1.300" /></B>,
  <B><path d="M12 1h10v8H12zM2 13h10v8H2z" fill="#1a2a9a" stroke="#c8c8c8" strokeWidth="1.500" /><path d="M11 11h13M1 23h13" stroke="#c8c8c8" strokeWidth="1.800" /><path d="M14 7l-5 5h4l-4 6" stroke="#f0e030" strokeWidth="1.800" /></B>,
  <B><circle cx="12" cy="12" r="11" fill="#7a5aa8" /><path d="M3 8Q12-4 21 8z" fill="#a88ac8" /><path d="M1.500 9.500h21M1 12h22M1.500 14.500h21" stroke="#e8def4" strokeWidth="1.300" /></B>,
  <B><path d="M1 3L13 1l10 5-1 13-9 4L3 20z" fill="#a040d0" /><path d="M13 1l10 4-2 5z" fill="#f050b0" /><path d="M4.500 4.500h14v14h-14z" fill="#111" /><text x="11.500" y="12.500" fontSize="8.500" fontWeight="700" textAnchor="middle" fill="#fff" fontFamily="'Open Sans', sans-serif">PS</text><path d="M6.500 16h5" stroke="#fff" /></B>,
  <B><path d="M4 12Q1 1 13 1q10 1 9 9 0 4-3 5l4 5-5 3.500Q6 21 4 12z" fill="#3f8fc8" /><path d="M4 4q3 12 14 16M8 2q3 10 13 12M2 9q3 9 12 13M12 1q2 6 10 8" stroke="#d4ecf8" strokeWidth="1.400" /><path d="M17 13l6 7-5 3-6-6z" fill="#b8dcf0" /></B>,
  <B><path d="M1 1h22v22H1z" fill="#111" /><path d="M1 0h22v5H1z" fill="#1020c0" /><path d="M2 10h4V8h12v2h4M2 18h4v2h12v-2h4M6 10v8M18 10v8" stroke="#38b8a8" strokeWidth="1.200" /><path d="M2 12.500h20M2 15.500h20" stroke="#e8d030" strokeWidth="1.200" /><path d="M7 14h10" stroke="#e06020" /><path d="M3 23v-2h3v2M18 23v-2h3v2" stroke="#30c050" /></B>,
  <B><circle cx="12" cy="12" r="11.500" fill="#dbe6ee" /><circle cx="12" cy="12" r="9.500" fill="#1488b8" /><path d="M12 20V6M12 17l-5-4V9M12 17l5-4V9M12 12l-3-3M12 12l3-3" stroke="#c8f4fc" strokeWidth="1.400" /><g fill="#c8f4fc"><circle cx="12" cy="5.500" r="1.600" /><circle cx="7" cy="8.500" r="1.600" /><circle cx="17" cy="8.500" r="1.600" /><circle cx="6.500" cy="13" r="1.500" /><circle cx="17.500" cy="13" r="1.500" /></g></B>,
  <B><path d="M3 1h17v22H3z" fill="#f0f4e8" stroke="#bbb" /><path d="M3 8h17v15H3z" fill="#58b030" /><path d="M7 11v7M10 12h2M13 12h2" stroke="#fff" strokeWidth="1.600" /><path d="M21 2l2 1-9 15-2 1v-3z" fill="#e8b838" /></B>,
  <B><path d="M7 1l15 3-5 19L2 18z" fill="#9ccad8" /><path d="M7 1l8 1.500-5 18L2 18z" fill="#cfe8ee" /><path d="M17 22l3 .5 3-17-2-1z" fill="#ddd" /></B>,
];

const LIT = [0, 1, 2, 3, 5, 14, 15, 16, 17, 18];

function Taskbar({ c }: { c: Cfg }) {
  const apps = c.many ? APPS : APPS.slice(0, 17);
  const used = 432 + (c.first - 432 - c.pitch / 2) + apps.length * c.pitch;
  return (
    <div className="flex h-[40px] w-[1600px] bg-[#101112] font-['Open_Sans',sans-serif] text-white">
      <div className="flex w-[48px] items-center justify-center bg-[#0a0a0a]">
        <svg width="17" height="17"><path d="M0 2.500l7-1v6.500H0zM8 1.300L17 0v8H8zM0 9h7v6.500l-7-1zM8 9h9v8l-9-1.300z" fill="#fff" /></svg>
      </div>
      <div className="flex w-[344px] items-center bg-[#333] pl-[12px] text-[14.4px] leading-none text-[#9a9a9a]">Search the web and Windows</div>
      <div className="flex w-[40px] items-center pl-[14px]">
        <svg width="20" height="16" fill="none" stroke="#fff"><path d="M5.500 1h9v14h-9z" strokeWidth="1.300" /><path d="M3 3H.7v10H3M17 3h2.300v10H17" /></svg>
      </div>
      <div className="flex" style={{ marginLeft: c.first - 432 - c.pitch / 2 }}>
        {apps.map((a, i) => (
          <div key={i} className="flex h-[40px] flex-col items-center" style={{ width: c.pitch }}>
            <div className={`flex h-[38px] items-center justify-center pt-[2px] ${i === 15 ? "w-[46px] bg-[#3d4040]" : "w-full"}`}>{a}</div>
            {c.many && LIT.includes(i) && <div className={`h-[2px] bg-[#dff5a8] ${i === 15 ? "w-[44px]" : "w-[39px]"}`} />}
          </div>
        ))}
      </div>
      <div className="flex items-center" style={{ marginLeft: 1358 - used }}>
        <svg width="124" height="24" fill="none">
          <path d="M1 15l5.500-6L12 15" stroke="#fff" strokeWidth="1.300" />
          <path d="M24 5l3 2-3 2.500L21 7zM32 5l3 2-3 2.500L29 7zM24 10l3 2-3 2-3-2zM32 10l3 2-3 2-3-2zM28 14l3 2-3 2-3-2z" fill="#fff" />
          <path d="M29 12h8v8h-8z" fill="#c83838" /><path d="M31 14l4 4M35 14l-4 4" stroke="#fff" strokeWidth="1.200" />
          <path d="M45.500 9.500h3l4-3.500v12l-4-3.500h-3z" stroke="#fff" /><path d="M55 9.500q1.500 2.500 0 5" stroke="#eee" /><path d="M57.500 7.500q3 4.500 0 9M60 6q4 6 0 12" stroke="#888" />
          <path d="M70 4h16v14h-5l-3 4v-4h-8z" fill="#fff" /><path d="M73 8h10M73 11h10M73 14h6" stroke="#222" />
          <path d="M94.500 5.500h21v12h-21z" stroke="#fff" strokeWidth="1.200" /><path d="M97 8.500h16M97 11.500h16" stroke="#fff" strokeDasharray="1.500 1" /><path d="M99 14.500h12" stroke="#fff" />
        </svg>
      </div>
      <div className={`ml-[-2px] flex h-[40px] w-[36px] flex-col items-center justify-center gap-[5px] text-[11.4px] leading-[12px] ${c.langLit ? "bg-[#2a2b2c]" : ""}`}>
        <span>ENG</span><span>US</span>
      </div>
      <div className="ml-[8px] flex h-[40px] w-[62px] flex-col items-center justify-center gap-[4px] whitespace-nowrap pb-[1px] text-[11.4px] leading-[12px] tracking-[-0.2px]">
        <span>{c.time}</span><span>2016-02-11</span>
      </div>
    </div>
  );
}

function WaveWindow({ c }: { c: Cfg }) {
  return (
    <div className="w-[1600px]">
      <TitleAndMenu mnemonics={c.mnemonics} />
      <div className="mx-px h-[818px] w-[1598px] border-x border-b border-t border-[#9a9a9a] bg-[#f0f0f0]">
        <div className="h-[815px] border-l border-t-[3px] border-white">
          <PaneTitle />
          <div className="h-px bg-[#777]" />
          <Toolbars off={c.disabled} />
          <Panel c={c} />
          <div className="h-[2px] border-b border-white" />
          <div className="flex h-[20px] border-t border-[#6c6c6c] font-['DejaVu_Sans_Condensed','Noto_Sans',sans-serif] text-[10.5px] leading-none text-[#111]">
            <div className="flex w-[170px] items-center border-r border-[#6c6c6c] pl-[5px]">{c.status}</div>
            <div className="flex flex-1 items-center pl-[6px]">{c.status2}</div>
            <svg width="14" height="19" className="self-end"><path d="M2 18L12 6M6 18l6-7M10 18l2-3" stroke="#888" /></svg>
          </div>
        </div>
      </div>
      <Taskbar c={c} />
    </div>
  );
}

const wide = { start: 0, end: 35700, grid: 2000, minor: 500, thumb: [18, 1286] as [number, number], status: "0 ps to 35700 ps" };
const newer = { first: 465, pitch: 47.8, many: true };

const SHOTS: { c: Cfg; pl: string; h: string; tip?: boolean }[] = [
  { pl: "", h: "h-[896px]", tip: true, c: { ...wide, noData: true, cursor: 34716, selected: 15, mark: 1251, first: 466, pitch: 49, many: false, time: "2:43 PM" } },
  { pl: "", h: "h-[928px]", c: { ...wide, ...newer, disabled: true, cursor: 547, status2: "(7)", mark: 36, time: "2:57 PM" } },
  { pl: "pl-[8px]", h: "h-[960px]", c: { ...wide, ...newer, cursor: 1421, selected: 16, status2: "(22)", mark: 67, time: "2:57 PM" } },
  { pl: "", h: "h-[944px]", c: { ...newer, start: 23533, end: 27447, grid: 200, minor: 50, thumb: [892, 1037], mnemonics: true, cursor: 26248, selected: 12, status: "23533 ps to 27447 ps", status2: "(18)", mark: 994, time: "2:58 PM", langLit: true } },
  { pl: "pl-[8px]", h: "h-[752px]", c: { ...newer, start: 25540, end: 29454, grid: 200, minor: 50, thumb: [960, 1105], mnemonics: true, cursor: 27093, selected: 10, status: "25540 ps to 29454 ps", mark: 1020, time: "2:58 PM" } },
];

export default function App() {
  return (
    <div className="h-[4096px] w-[1463px] overflow-hidden bg-white">
      <svg width="0" height="0" className="absolute">
        <defs>
          <pattern id="dk" width="2" height="2" patternUnits="userSpaceOnUse"><path d="M0 0h1v1H0zM1 1h1v1H1z" fill="#444" /></pattern>
          <pattern id="rd" width="2" height="2" patternUnits="userSpaceOnUse"><path d="M0 0h2v2H0z" fill="#f08a78" /><path d="M0 0h1v1H0zM1 1h1v1H1z" fill="#d83828" /></pattern>
          <pattern id="bd" width="2" height="2" patternUnits="userSpaceOnUse"><path d="M0 0h2v2H0z" fill="#c4ccdc" /><path d="M0 0h1v1H0zM1 1h1v1H1z" fill="#283c78" /></pattern>
        </defs>
      </svg>
      <div className="h-[4480px] w-[1600px] origin-top-left scale-[0.9143]">
        {SHOTS.map((s, i) => (
          <div key={i} className={`relative w-[1600px] overflow-hidden bg-white ${s.pl} ${s.h}`}>
            <WaveWindow c={s.c} />
            {s.tip && (
              <div className="absolute left-[1227px] top-[434px] flex h-[36px] w-[363px] flex-col justify-center gap-[1px] whitespace-pre border border-black bg-[#ffffe1] pl-[2px] font-['Liberation_Mono',monospace] text-[11.66px] leading-[15px] text-[#111]">
                <span>sim:/g14_26_5_encoder_vhd_tst/LETTER(18) @ 34743 ps</span>
                <span>No_Data</span>
              </div>
            )}
          </div>
        ))}
      </div>
    </div>
  );
}
